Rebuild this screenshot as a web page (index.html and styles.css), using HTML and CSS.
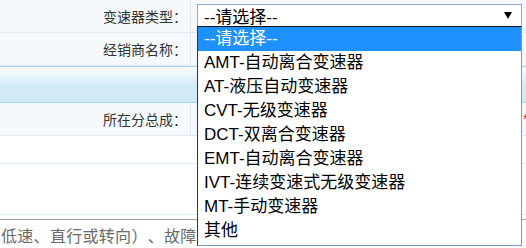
FILE: index.html
```html
<!DOCTYPE html>
<html lang="zh-CN">
<head>
    <meta charset="UTF-8">
    <meta name="viewport" content="width=device-width, initial-scale=1.0">
    <title>故障信息</title>
    <link rel="stylesheet" href="styles.css">
</head>
<body>
    <div class="form">
        <div class="row tall">
            <div class="label">变速器类型：</div>
            <div class="value">
                <div class="select">
                    <span>--请选择--</span>
                    <svg class="arrow" width="8" height="7" viewBox="0 0 8 7"><path d="M0 0H8L4 7Z" fill="#000"/></svg>
                </div>
            </div>
        </div>
        <div class="row tall">
            <div class="label">经销商名称：</div>
            <div class="value"></div>
        </div>

        <!-- section header bar -->
        <div class="band"></div>

        <div class="row tall">
            <div class="label">所在分总成：</div>
            <div class="value"><span class="req">*</span></div>
        </div>
        <div class="row plain short"></div>
        <div class="row plain wide"></div>
    </div>

    <div class="desc">低速、直行或转向）、故障</div>

    <!-- open select list -->
    <ul class="dropdown">
        <li class="active">--请选择--</li>
        <li>AMT-自动离合变速器</li>
        <li>AT-液压自动变速器</li>
        <li>CVT-无级变速器</li>
        <li>DCT-双离合变速器</li>
        <li>EMT-自动离合变速器</li>
        <li>IVT-连续变速式无级变速器</li>
        <li>MT-手动变速器</li>
        <li>其他</li>
    </ul>
</body>
</html>
```

FILE: styles.css
```css
* {
    margin: 0;
    padding: 0;
    box-sizing: border-box;
}

body {
    font-family: "Liberation Sans", "Noto Sans CJK SC", sans-serif;
    background-color: #fff;
    color: #333;
    width: 526px;
    height: 248px;
    overflow: hidden;
    position: relative;
    text-spacing-trim: space-all;
}

.form {
    display: flex;
    flex-direction: column;
}

.row {
    display: flex;
    background-color: #f5f9fe;
    border-bottom: 1px solid #dcebf6;
}

.row.tall {
    height: 33px;
}

.row.plain {
    background-color: #fff;
}

.row.short {
    height: 28px;
}

.row.wide {
    height: 51px;
}

.label {
    width: 191px;
    flex-shrink: 0;
    border-right: 1px solid #dcebf6;
    padding-right: 3px;
    font-family: "Noto Sans CJK SC", sans-serif;
    font-size: 14px;
    display: flex;
    align-items: center;
    justify-content: flex-end;
}

.value {
    flex: 1;
    display: flex;
    align-items: flex-start;
    padding-left: 6px;
}

.select {
    margin-top: 4px;
    width: 325px;
    height: 23px;
    border: 1px solid #8fa9d6;
    background-color: #fff;
    display: flex;
    align-items: center;
    justify-content: space-between;
    padding: 0 9px 0 6px;
    font-size: 17px;
    color: #000;
}

.band {
    height: 37px;
    border-top: 1px solid #a9d6ec;
    border-bottom: 1px solid #a9d6ec;
    background: linear-gradient(to bottom, #fbfdfe 0, #d2ebf6 19px, #cfe9f5 100%);
}

.req {
    color: #e8232a;
    font-size: 14px;
    margin-left: 326px;
    margin-top: 8px;
}

.desc {
    margin-top: 4px;
    border-top: 1px solid #a0a0a0;
    padding: 3px 0 0 1px;
    font-family: "Noto Sans CJK SC", sans-serif;
    font-size: 16px;
    letter-spacing: 0.3px;
    line-height: 24px;
    color: #6a6a6a;
    white-space: nowrap;
}

.dropdown {
    position: absolute;
    top: 26px;
    left: 197px;
    width: 325px;
    list-style-type: none;
    background-color: #fff;
    border: 1px solid #7b98cc;
    border-top-color: #111;
    border-left-color: #2a3650;
    padding-bottom: 2px;
}

.dropdown li {
    height: 24px;
    line-height: 24px;
    padding-left: 6px;
    font-size: 17px;
    color: #000;
}

.dropdown li.active {
    background-color: #1e90ff;
    color: #fff;
}
```
